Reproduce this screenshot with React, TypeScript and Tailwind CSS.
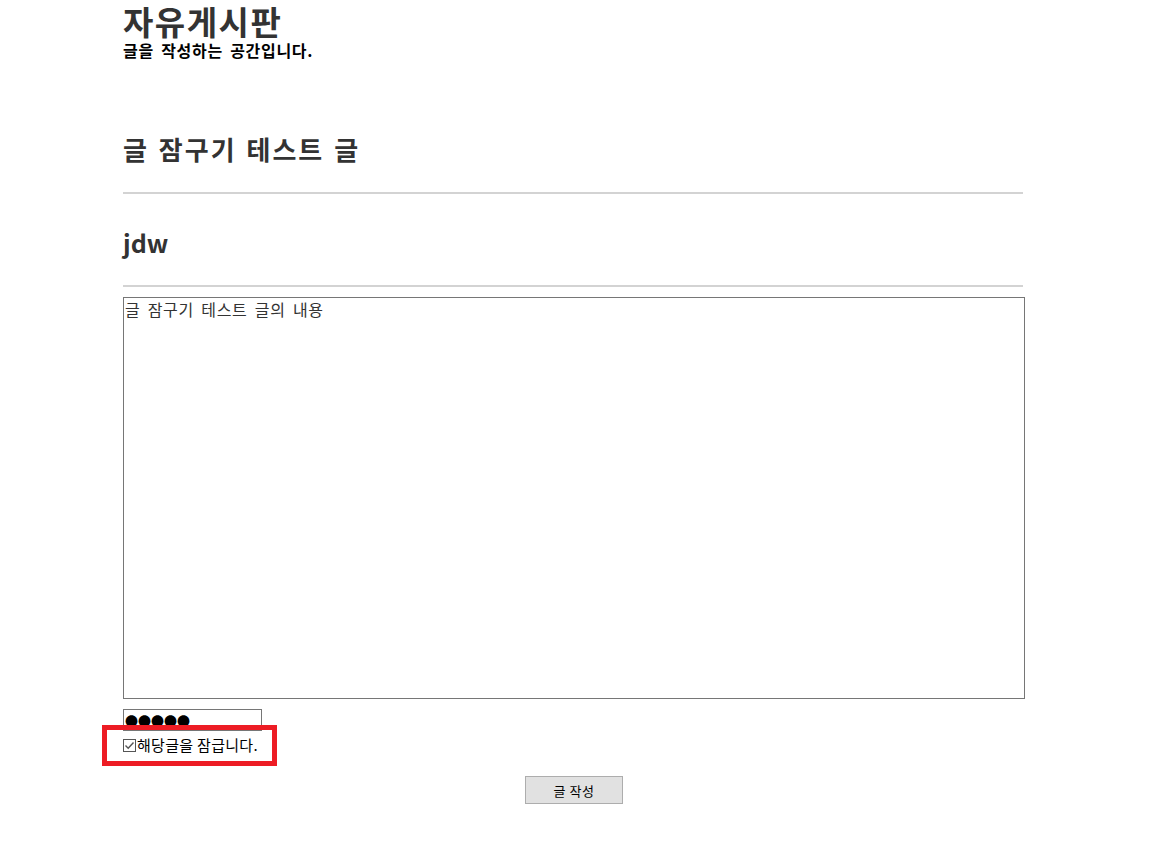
export default function App() {
  return (
    <div
      className="relative min-h-[861px] bg-white text-black"
      style={{ fontFamily: '"Noto Sans CJK KR", "Noto Sans", sans-serif' }}
    >
      <div className="ml-[123px] w-[902px]">
        <h1 className="pt-[2px] text-[33px] font-bold leading-[38px] tracking-[1.5px] text-[#333]">
          자유게시판
        </h1>
        <p className="text-[16px] font-bold leading-[21px] tracking-[0.7px] [word-spacing:3px]">
          글을 작성하는 공간입니다.
        </p>

        <h3 className="mt-[72px] text-[26px] font-bold leading-[32px] tracking-[2px] [word-spacing:2px] text-[#333]">
          글 잠구기 테스트 글
        </h3>
        <div className="mt-[27px] h-[2px] w-[900px] bg-[#d3d3d3]" />

        <h3 className="mt-[32px] text-[25px] font-bold leading-[32px] text-[#333]">jdw</h3>
        <div className="mt-[27px] h-[2px] w-[900px] bg-[#d3d3d3]" />

        <textarea
          className="mt-[10px] block h-[402px] w-[902px] resize-none border border-[#767676] px-[1px] py-0 text-[16px] leading-[22px] tracking-[0.7px] [word-spacing:3px] text-[#333] outline-none"
          defaultValue="글 잠구기 테스트 글의 내용"
        />

        <div className="mt-[10px] flex h-[22px] w-[139px] items-center overflow-hidden border border-[#767676] px-[1px] text-[13px] leading-none">
          ●●●●●
        </div>

        <label className="mt-[4px] flex h-[20px] items-center text-[15px]">
          <span className="flex h-[13px] w-[13px] items-center justify-center border border-[#555]">
            <svg width="11" height="11" viewBox="0 0 11 11" fill="none">
              <path d="M1.5 5.5 L4.2 8.2 L9.5 2.5" stroke="#555" strokeWidth="1.4" />
            </svg>
          </span>
          <span className="ml-[1px] tracking-[0.3px]">해당글을 잠급니다.</span>
        </label>

        <div className="mt-[21px] flex justify-center">
          <button className="h-[28px] w-[98px] border border-[#adadad] bg-[#e1e1e1] text-[13px] leading-none tracking-[0.5px]">
            글 작성
          </button>
        </div>
      </div>

      <div className="pointer-events-none absolute left-[102px] top-[725px] h-[41px] w-[175px] border-[5px] border-[#ed1c24]" />
    </div>
  );
}
